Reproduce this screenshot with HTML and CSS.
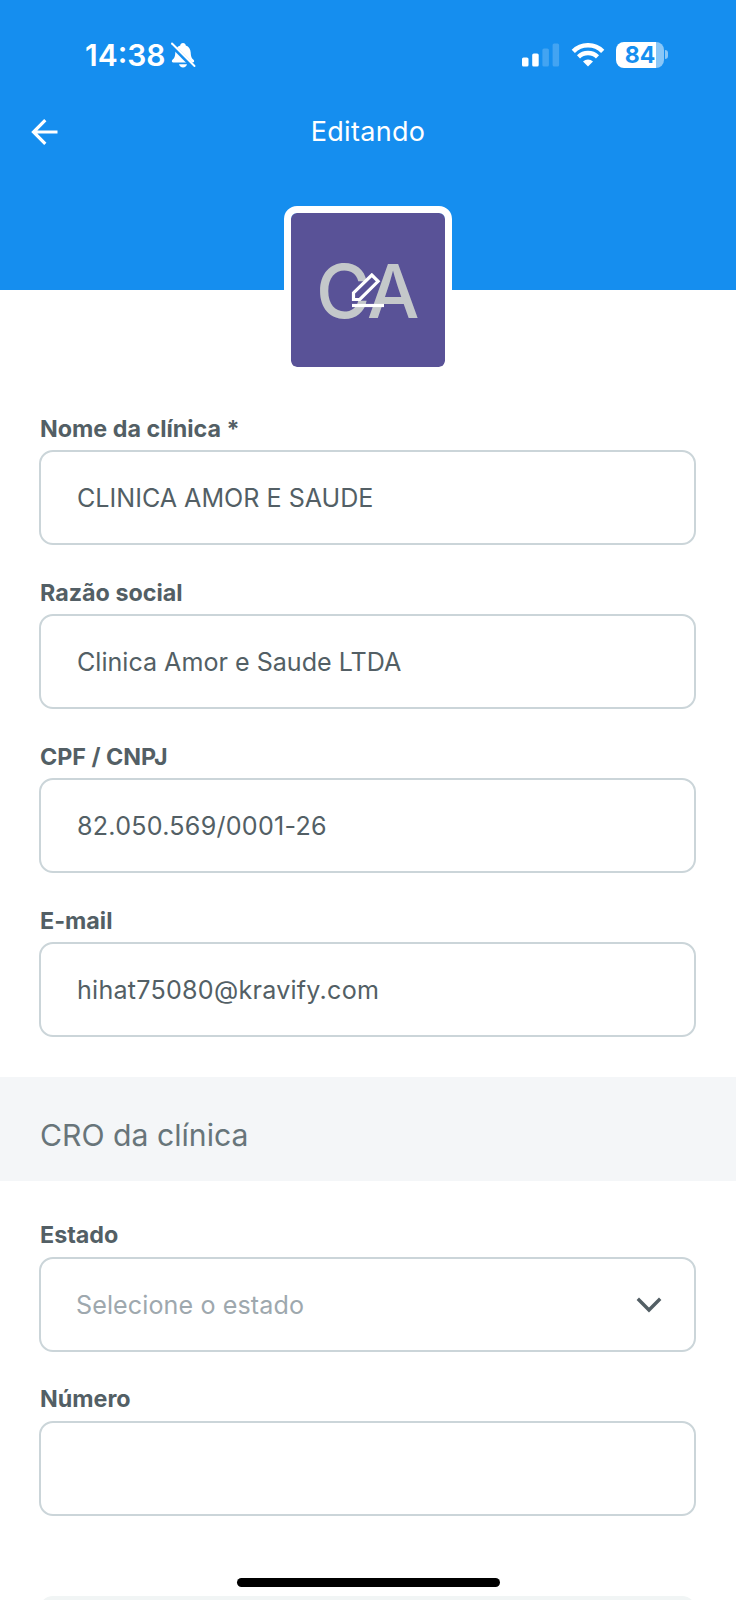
FILE: index.html
```html
<!DOCTYPE html>
<html lang="pt-br">
<head>
    <meta charset="UTF-8">
    <meta name="viewport" content="width=device-width, initial-scale=1.0">
    <title>Editando</title>
    <link rel="stylesheet" href="styles.css">
</head>
<body>
    <div class="app">
        <header class="topo">
            <!-- Barra de status -->
            <div class="status">
                <div class="status-hora">
                    <span class="hora">14:38</span>
                    <svg class="icone-sino" width="26" height="28" viewBox="0 0 26 28">
                        <path d="M13 2c1.700 0 2.600 1 2.800 2.400 3.200 1.100 4.700 3.700 4.900 7.100.2 4.300 1 5.600 3 7.600.9 1 .4 2.500-1 2.500H3.300c-1.400 0-1.900-1.500-1-2.500 2-2 2.800-3.300 3-7.600.2-3.400 1.700-6 4.900-7.100C10.400 3 11.300 2 13 2z" fill="#fff"/>
                        <path d="M9 23.200h8c-.4 2-2 3.200-4 3.200s-3.600-1.200-4-3.200z" fill="#fff"/>
                        <path d="M1 3.500L23.500 26" stroke="#158eef" stroke-width="4.400"/>
                        <path d="M2 2.500L24.500 25" stroke="#fff" stroke-width="1.900" stroke-linecap="round"/>
                    </svg>
                </div>
                <div class="status-icones">
                    <svg width="38" height="24" viewBox="0 0 38 24">
                        <rect x="0" y="14.500" width="6.500" height="9" rx="1.600" fill="#fff"/>
                        <rect x="10.200" y="10.500" width="6.500" height="13" rx="1.600" fill="#fff"/>
                        <rect x="20.400" y="5.500" width="6.500" height="18" rx="1.600" fill="#fff" opacity=".2"/>
                        <rect x="30.600" y="0.500" width="6.500" height="23" rx="1.600" fill="#fff" opacity=".2"/>
                    </svg>
                    <svg class="wifi" width="34" height="24" viewBox="0 0 34 24">
                        <path d="M2.300 8.300a21 21 0 0 1 29.400 0" fill="none" stroke="#fff" stroke-width="4.600"/>
                        <path d="M7.500 13.900a13.600 13.600 0 0 1 19 0" fill="none" stroke="#fff" stroke-width="4.400"/>
                        <path d="M17 23.500l-5-5a7.200 7.200 0 0 1 10 0z" fill="#fff"/>
                    </svg>
                    <div class="bateria">
                        <div class="bateria-corpo">84</div>
                        <div class="bateria-ponta"></div>
                    </div>
                </div>
            </div>

            <!-- Navegação -->
            <div class="navegacao">
                <button class="botao-voltar" aria-label="Voltar">
                    <svg width="28" height="28" viewBox="0 0 28 28" fill="none" stroke="#fff" stroke-width="3.200">
                        <path d="M14.300 2.200L2.500 14l11.800 11.800M2.500 14H26.500"/>
                    </svg>
                </button>
                <h1 class="titulo">Editando</h1>
            </div>
        </header>

        <!-- Foto da clínica -->
        <div class="avatar">
            <span class="iniciais">CA</span>
            <svg class="icone-editar" width="34" height="36" viewBox="0 0 34 36" fill="none" stroke="#fff" stroke-width="3.200">
                <path d="M2.500 26.500v-6.600L20.800 2l6.300 6.300L8.800 26.500z"/>
                <path d="M1 32.500h32"/>
            </svg>
        </div>

        <form class="formulario">
            <div class="campo">
                <label for="nome">Nome da clínica *</label>
                <input type="text" id="nome" value="CLINICA AMOR E SAUDE">
            </div>
            <div class="campo">
                <label for="razao">Razão social</label>
                <input type="text" id="razao" value="Clinica Amor e Saude LTDA">
            </div>
            <div class="campo">
                <label for="documento">CPF / CNPJ</label>
                <input type="text" id="documento" class="espacado" value="82.050.569/0001-26">
            </div>
            <div class="campo">
                <label for="email">E-mail</label>
                <input type="text" id="email" class="espacado" value="hihat75080@kravify.com">
            </div>
        </form>

        <h2 class="secao">CRO da clínica</h2>

        <form class="formulario formulario-cro">
            <div class="campo">
                <label>Estado</label>
                <div class="seletor">
                    <span>Selecione o estado</span>
                    <svg width="26" height="16" viewBox="0 0 26 16" fill="none" stroke="#535f65" stroke-width="3.400">
                        <path d="M1.800 1.800L13 13 24.200 1.800"/>
                    </svg>
                </div>
            </div>
            <div class="campo">
                <label for="numero">Número</label>
                <input type="text" id="numero">
            </div>
            <div class="proximo"></div>
        </form>

        <div class="indicador"></div>
    </div>
</body>
</html>
```
FILE: styles.css
```css
* {
    margin: 0;
    padding: 0;
    box-sizing: border-box;
}

body {
    font-family: 'Inter', sans-serif;
    background-color: #fff;
    color: #535f65;
    overflow: hidden;
}

.app {
    position: relative;
    width: 736px;
    height: 1600px;
    overflow: hidden;
}

.topo {
    height: 290px;
    background-color: #158eef;
    color: #fff;
}

.status {
    display: flex;
    justify-content: space-between;
    align-items: center;
    height: 109px;
    padding: 0 68px 0 85px;
}

.status-hora,
.status-icones {
    display: flex;
    align-items: center;
}

.hora {
    font-size: 30px;
    font-weight: 600;
}

.icone-sino {
    margin-left: 4px;
}

.wifi {
    margin: 0 11px 0 11px;
}

.bateria {
    display: flex;
    align-items: center;
    gap: 1px;
}

.bateria-corpo {
    width: 48px;
    height: 26px;
    border-radius: 8px;
    background: linear-gradient(to right, #fff 40px, #8ac7f7 40px);
    color: #158eef;
    font-size: 23px;
    font-weight: 700;
    line-height: 26px;
    text-align: center;
}

.bateria-ponta {
    width: 3px;
    height: 9px;
    border-radius: 0 4px 4px 0;
    background-color: #8ac7f7;
}

.navegacao {
    display: grid;
    grid-template-columns: 60px 1fr 60px;
    align-items: center;
    height: 45px;
    padding: 0 30px;
}

.botao-voltar {
    display: flex;
    padding-left: 1px;
    background: none;
    border: none;
    cursor: pointer;
}

.titulo {
    font-size: 27px;
    font-weight: 400;
    letter-spacing: 0.3px;
    text-align: center;
}

.avatar {
    position: relative;
    display: flex;
    justify-content: center;
    align-items: center;
    width: 168px;
    height: 168px;
    margin: -84px auto 0;
    border: 7px solid #fff;
    border-radius: 13px;
    background-color: #595297;
    background-clip: padding-box;
}

.iniciais {
    padding: 1px 2px 0 0;
    font-size: 74px;
    font-weight: 500;
    letter-spacing: -1.5px;
    color: #c4c8ca;
}

/* Lápis sobre as iniciais */
.icone-editar {
    position: absolute;
    top: 60px;
    left: 60px;
}

.formulario {
    display: flex;
    flex-direction: column;
    gap: 34px;
    padding: 41px 40px 40px 39px;
}

.campo {
    display: flex;
    flex-direction: column;
    gap: 7px;
}

.campo label {
    height: 28px;
    padding-left: 1px;
    font-size: 23.3px;
    font-weight: 700;
    line-height: 28px;
}

.campo input,
.seletor {
    width: 100%;
    height: 95px;
    padding: 0 36px;
    border: 2px solid #cbd5d9;
    border-radius: 14px;
    background-color: #fff;
    color: #535f65;
    font-family: inherit;
    font-size: 25.1px;
    outline: none;
}

.campo .espacado {
    letter-spacing: 0.25px;
}

.seletor {
    display: flex;
    justify-content: space-between;
    align-items: center;
    padding: 0 32px 0 35px;
    color: #9ea8ae;
    letter-spacing: 0.1px;
}

.secao {
    height: 104px;
    padding: 0 40px;
    background-color: #f4f6f8;
    color: #68757a;
    font-size: 30.2px;
    font-weight: 400;
    line-height: 116px;
}

.formulario-cro {
    padding-top: 40px;
    padding-bottom: 0;
}

.formulario-cro .campo {
    gap: 8px;
}

.formulario-cro .campo + .campo {
    margin-top: -1px;
}

.proximo {
    height: 95px;
    margin-top: 46px;
    border-radius: 14px;
    background-color: #f1f5f5;
    flex-shrink: 0;
}

/* Barra inferior do sistema */
.indicador {
    position: absolute;
    bottom: 13px;
    left: 237px;
    width: 263px;
    height: 9px;
    border-radius: 5px;
    background-color: #000;
}
```
